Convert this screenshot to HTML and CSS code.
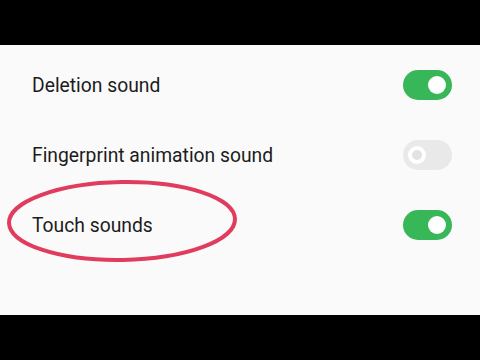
FILE: index.html
```html
<!DOCTYPE html>
<html>
<head>
<meta charset="utf-8">
<link rel="stylesheet" href="styles.css">
</head>
<body>
<div class="bar"></div>
<main class="content">
  <div class="row">
    <span class="label">Deletion sound</span>
    <span class="switch on"><span class="knob"></span></span>
  </div>
  <div class="row">
    <span class="label">Fingerprint animation sound</span>
    <span class="switch off"><span class="knob"></span></span>
  </div>
  <div class="row">
    <span class="label">Touch sounds</span>
    <span class="switch on"><span class="knob"></span></span>
  </div>
  <svg class="circle" width="250" height="100" viewBox="0 0 250 100">
    <ellipse cx="122" cy="51" rx="113" ry="39" fill="none" stroke="#e03d5e" stroke-width="4" transform="rotate(-1 122 51)"/>
  </svg>
</main>
<div class="bar"></div>
</body>
</html>
```
FILE: styles.css
```css
html, body {
  margin: 0;
  padding: 0;
  background: #000;
}
body {
  width: 480px;
  height: 360px;
  display: flex;
  flex-direction: column;
  font-family: Roboto, "Noto Sans", sans-serif;
}
.bar {
  height: 45px;
  background: #000;
}
.content {
  position: relative;
  height: 270px;
  background: #fafafa;
  padding-top: 5px;
  box-sizing: border-box;
}
.row {
  height: 70px;
  display: flex;
  align-items: center;
  justify-content: space-between;
  padding: 0 28px 0 32px;
}
.label {
  font-size: 19.3px;
  color: #1c1c1c;
}
.switch {
  width: 49px;
  height: 30px;
  border-radius: 15px;
  display: flex;
  align-items: center;
  box-sizing: border-box;
}
.switch.on {
  background: #37b757;
  justify-content: flex-end;
  padding-right: 6px;
}
.switch.on .knob {
  width: 18px;
  height: 18px;
  border-radius: 50%;
  background: #fff;
}
.switch.off {
  background: #e9e9e9;
  padding-left: 5px;
}
.switch.off .knob {
  width: 18px;
  height: 18px;
  border-radius: 50%;
  box-sizing: border-box;
  border: 4px solid #fff;
  background: #e2e2e2;
}
.circle {
  position: absolute;
  left: 0;
  top: 125px;
}
```
